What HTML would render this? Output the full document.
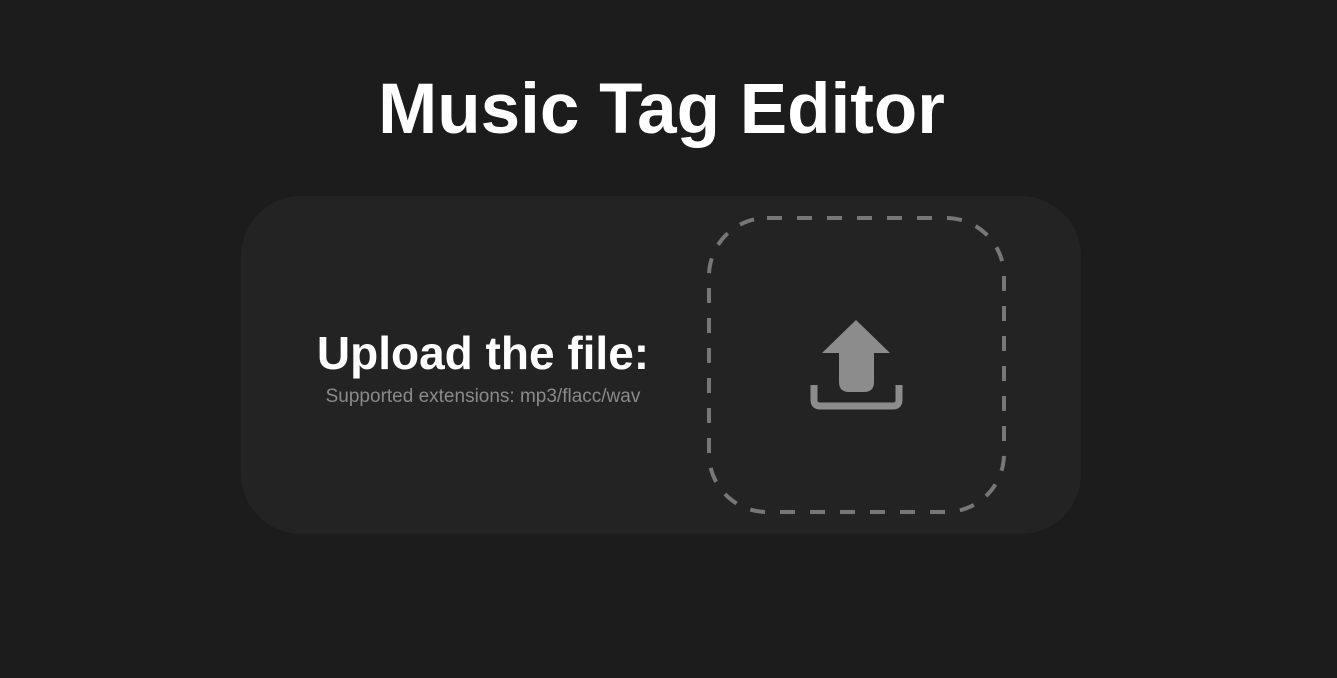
<!DOCTYPE html>
<html><head><style>
html,body{margin:0;padding:0;width:1337px;height:678px;background:#1c1c1c;overflow:hidden;font-family:"Liberation Sans",sans-serif;}
.t{position:absolute;left:0;width:1337px;text-align:center;top:65px;color:#fff;font-weight:bold;font-size:71px;line-height:90px;}
.t span{position:relative;left:-7px}
.card{position:absolute;left:241px;top:196px;width:840px;height:338px;border-radius:60px;background:#232323;}
.h{position:absolute;left:283px;width:400px;text-align:center;top:325px;color:#fff;font-weight:bold;font-size:46px;line-height:56px;}
.s{position:absolute;left:283px;width:400px;text-align:center;top:386px;color:#8a8a8a;font-size:19px;line-height:22px;}
svg{position:absolute;left:0;top:0}
</style></head><body>
<div class="t"><span>Music Tag Editor</span></div>
<div class="card"></div>
<div class="h">Upload the file:</div>
<div class="s">Supported extensions: mp3/flacc/wav</div>
<svg width="1337" height="678">
<rect x="709" y="218" width="295" height="294" rx="58" fill="none" stroke="#777" stroke-width="4" stroke-dasharray="15 15"/>
<path d="M856 320 L890 353 L874 353 L874 382 Q874 392 864 392 L849 392 Q839 392 839 382 L839 353 L822 353 Z" fill="#8c8c8c"/>
<path d="M814 385 V400 Q814 406 820 406 H893 Q899 406 899 400 V385" fill="none" stroke="#8c8c8c" stroke-width="7"/>
</svg>
</body></html>
